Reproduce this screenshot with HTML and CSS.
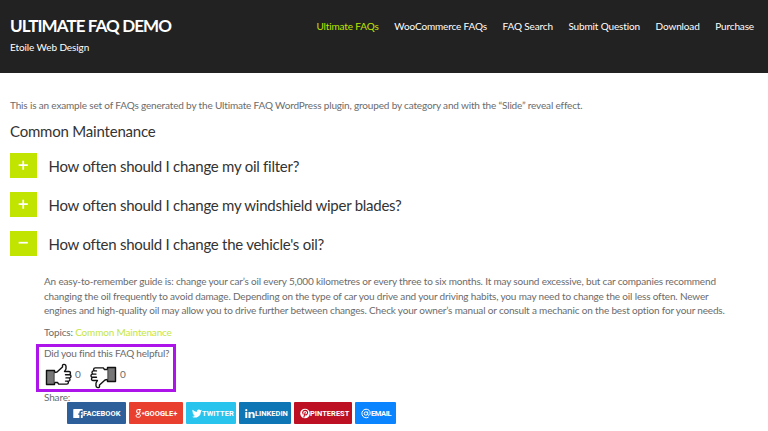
FILE: index.html
```html
<!DOCTYPE html>
<html lang="en">
<head>
<meta charset="utf-8">
<title>Ultimate FAQ Demo</title>
<link rel="stylesheet" href="styles.css">
</head>
<body>
<header class="header">
  <div class="brand">
    <h1 class="site-title">ULTIMATE FAQ DEMO</h1>
    <p class="tagline">Etoile Web Design</p>
  </div>
  <nav class="nav">
    <a class="active">Ultimate FAQs</a><a>WooCommerce FAQs</a><a>FAQ Search</a><a>Submit Question</a><a>Download</a><a>Purchase</a>
  </nav>
</header>
<main class="content">
  <p class="intro">This is an example set of FAQs generated by the Ultimate FAQ WordPress plugin, grouped by category and with the “Slide” reveal effect.</p>
  <h2 class="category">Common Maintenance</h2>
  <div class="faqs">
    <div class="question"><span class="toggle"><svg viewBox="0 0 26 25"><path d="M8.500 12h9M13 7.500v9"/></svg></span><h3>How often should I change my oil filter?</h3></div>
    <div class="question"><span class="toggle"><svg viewBox="0 0 26 25"><path d="M8.500 12h9M13 7.500v9"/></svg></span><h3>How often should I change my windshield wiper blades?</h3></div>
    <div class="question"><span class="toggle"><svg viewBox="0 0 26 25"><path d="M8.500 11.500h9"/></svg></span><h3>How often should I change the vehicle's oil?</h3></div>
  </div>
  <div class="answer">
    <p class="body">An easy-to-remember guide is: change your car’s oil every 5,000 kilometres or every three to six months. It may sound excessive, but car companies recommend<br>changing the oil frequently to avoid damage. Depending on the type of car you drive and your driving habits, you may need to change the oil less often. Newer<br>engines and high-quality oil may allow you to drive further between changes. Check your owner’s manual or consult a mechanic on the best option for your needs.</p>
    <p class="topics">Topics: <a>Common Maintenance</a></p>
    <div class="helpful">
      <p>Did you find this FAQ helpful?</p>
      <div class="votes">
        <svg class="thumb" viewBox="0 0 27 26"><path class="cuff" d="M1.500 7.500h8v14h-8z"/><path d="M9.500 9.500 12 9l5.500-5V2.500c0-1.800 3.500-1.500 3.500.8V6L19.500 8.500h4.500c2 0 2 3.200 0 3.200h-3.500 4c2 0 2 3.200 0 3.200h-3.500 2.500c2 0 2 3.200 0 3.200h-3 1.500c2 0 1.800 3-.3 3h-8L12.500 19.500h-3"/></svg>
        <span>0</span>
        <svg class="thumb" viewBox="0 0 27 26"><path class="cuff" d="M17.500 4.500h8v14h-8z"/><path d="M17.500 16.500 15 17l-5.500 5v1.500c0 1.800-3.500 1.500-3.500-.8V20L7.500 17.500H3c-2 0-2-3.200 0-3.200h3.500-4c-2 0-2-3.200 0-3.200H6 3.500c-2 0-2-3.200 0-3.200h3H5c-2 0-1.800-3 .3-3h8L14.500 6.500h3"/></svg>
        <span>0</span>
      </div>
    </div>
    <p class="share-label">Share:</p>
    <div class="share">
      <a class="facebook"><svg viewBox="0 0 11 11"><path fill="#fff" d="M1 .5h9q.7 0 .7.700v8.600q0 .7-.7.700H8.700V7h1.400l.2-1.600H8.700V4.500q0-.7.800-.7h.9V2.300H9Q7 2.300 7 4.300v1.100H5.700V7H7v3.500H1q-.7 0-.7-.7V1.200Q.3.500 1 .5z"/></svg><span>FACEBOOK</span></a>
      <a class="google"><svg viewBox="0 0 12 12"><g fill="none" stroke="#fff"><ellipse cx="4" cy="3.400" rx="2" ry="2.200" stroke-width="1.300"/><path stroke-width="1.200" d="M4 1.200h3M5 5.300c-1.500 1 1.800 1.500 1.600 3.400-.3 2.500-5.400 2.300-5.500.2 0-1.500 2-2 4-1.900"/><path stroke-width="1" d="M8 5.800h3.400M9.700 4.100v3.400"/></g></svg><span>GOOGLE+</span></a>
      <a class="twitter"><svg viewBox="0 0 24 24"><path fill="#fff" d="M24 4.600a10 10 0 0 1-2.800.8 5 5 0 0 0 2.100-2.700 10 10 0 0 1-3.100 1.200 4.900 4.900 0 0 0-8.400 4.500A14 14 0 0 1 1.700 3.200a4.900 4.900 0 0 0 1.500 6.500 5 5 0 0 1-2.200-.6 4.900 4.900 0 0 0 3.900 4.900 5 5 0 0 1-2.200.1 4.900 4.900 0 0 0 4.600 3.400A10 10 0 0 1 0 19.500 14 14 0 0 0 21.500 7 10 10 0 0 0 24 4.600z"/></svg><span>TWITTER</span></a>
      <a class="linkedin"><svg viewBox="0 0 10 10"><path fill="#fff" d="M.3 3.500h2v6h-2zM3.500 3.500h1.900v.8c1-1.500 4.300-1.200 4.300 1.600v3.600h-2V6.200c0-1.600-2.200-1.500-2.200 0v3.300h-2z"/><circle cx="1.300" cy="1.700" r="1.100" fill="#fff"/></svg><span>LINKEDIN</span></a>
      <a class="pinterest"><svg viewBox="0 0 10 10"><circle cx="5" cy="5" r="4.800" fill="#fff"/><path fill="none" stroke="#bd081c" stroke-width="1.100" stroke-linecap="round" d="M3.100 5.600C1.700 2.600 4 1.900 5.200 1.900c2 0 2.700 1.500 2.200 3-.5 1.700-1.900 1.900-2.600 1M5.200 3.800 3.900 8.700"/></svg><span>PINTEREST</span></a>
      <a class="email"><svg viewBox="0 0 10 10"><g fill="none" stroke="#fff" stroke-width="1"><circle cx="4.900" cy="5" r="1.700"/><path d="M6.700 3v3c0 1.400 2.500 1 2.500-1.300C9.200 2.200 7.400.7 5 .7a4.300 4.300 0 1 0 2.500 7.900"/></g></svg><span>EMAIL</span></a>
    </div>
  </div>
</main>
</body>
</html>
```
FILE: styles.css
```css
* { box-sizing: border-box; }
body {
  margin: 0;
  height: 431px;
  overflow: hidden;
  background: #fff;
  color: #6b6b6b;
  font-family: Lato, "Liberation Sans", sans-serif;
  font-size: 10px;
  letter-spacing: -0.166px;
}
h1, h2, h3, p { margin: 0; font-weight: 400; }
svg { display: block; flex: none; }
.header {
  display: flex;
  justify-content: space-between;
  height: 72.5px;
  padding: 16px 14px 0 10px;
  background: #222;
  color: #fff;
  white-space: nowrap;
}
.site-title { font-size: 17px; line-height: 20px; font-weight: 700; letter-spacing: -0.9px; }
.tagline { margin-top: 5px; line-height: 13px; letter-spacing: -0.1px; }
.nav { display: flex; gap: 15.6px; padding-top: 4px; line-height: 13px; letter-spacing: -0.14px; }
.nav .active { color: #bfe600; }
.content { padding: 25.5px 10px 0; white-space: nowrap; }
.intro { line-height: 14px; letter-spacing: -0.16px; }
.category { margin-top: 9px; font-size: 15px; line-height: 20px; color: #333; letter-spacing: -0.2px; }
.faqs { display: grid; gap: 14px; margin-top: 12px; }
.question { display: flex; align-items: center; gap: 12px; height: 25px; }
.question h3 { padding-top: 2px; font-size: 15px; line-height: 25px; color: #333; letter-spacing: -0.26px; }
.toggle { width: 26.5px; height: 25px; background: #c1e500; }
.toggle path { fill: none; stroke: #fff; stroke-width: 1.7; }
.answer { padding-left: 34px; }
.body { margin-top: 18px; line-height: 14.67px; }
.topics { margin-top: 7px; line-height: 14px; }
.topics a { color: #c5e63c; }
.helpful {
  width: 140px;
  height: 48px;
  margin: 5px 0 0 -8px;
  padding-left: 5px;
  border: 3px solid #ac14ea;
}
.helpful p { line-height: 13px; letter-spacing: -0.21px; }
.votes { display: flex; margin: 3px 0 0 1px; }
.votes span { width: 18px; padding-left: 3px; line-height: 22px; }
.thumb { width: 27px; height: 26px; }
.thumb path { fill: #fff; stroke: #111; stroke-width: 1.4; stroke-linejoin: round; }
.thumb .cuff { fill: #777; }
.share-label { line-height: 10px; }
.share { display: flex; gap: 3px; margin-left: 23px; }
.share a {
  display: flex;
  align-items: center;
  height: 22px;
  padding-left: 6px;
  border-radius: 1px;
  color: #fff;
  font: 700 7.5px Roboto, sans-serif;
  letter-spacing: 0;
}
.share svg { width: 10px; height: 11px; }
.facebook { width: 58.5px; background: #2d5f9a; }
.google { width: 54.5px; background: #e93f2e; }
.twitter { width: 50px; background: #28c4ee; }
.linkedin { width: 52px; background: #0e76b4; }
.pinterest { width: 58px; background: #bd1022; }
.email { width: 41px; background: #0b84ff; }
.share .email { letter-spacing: -0.4px; }
```
